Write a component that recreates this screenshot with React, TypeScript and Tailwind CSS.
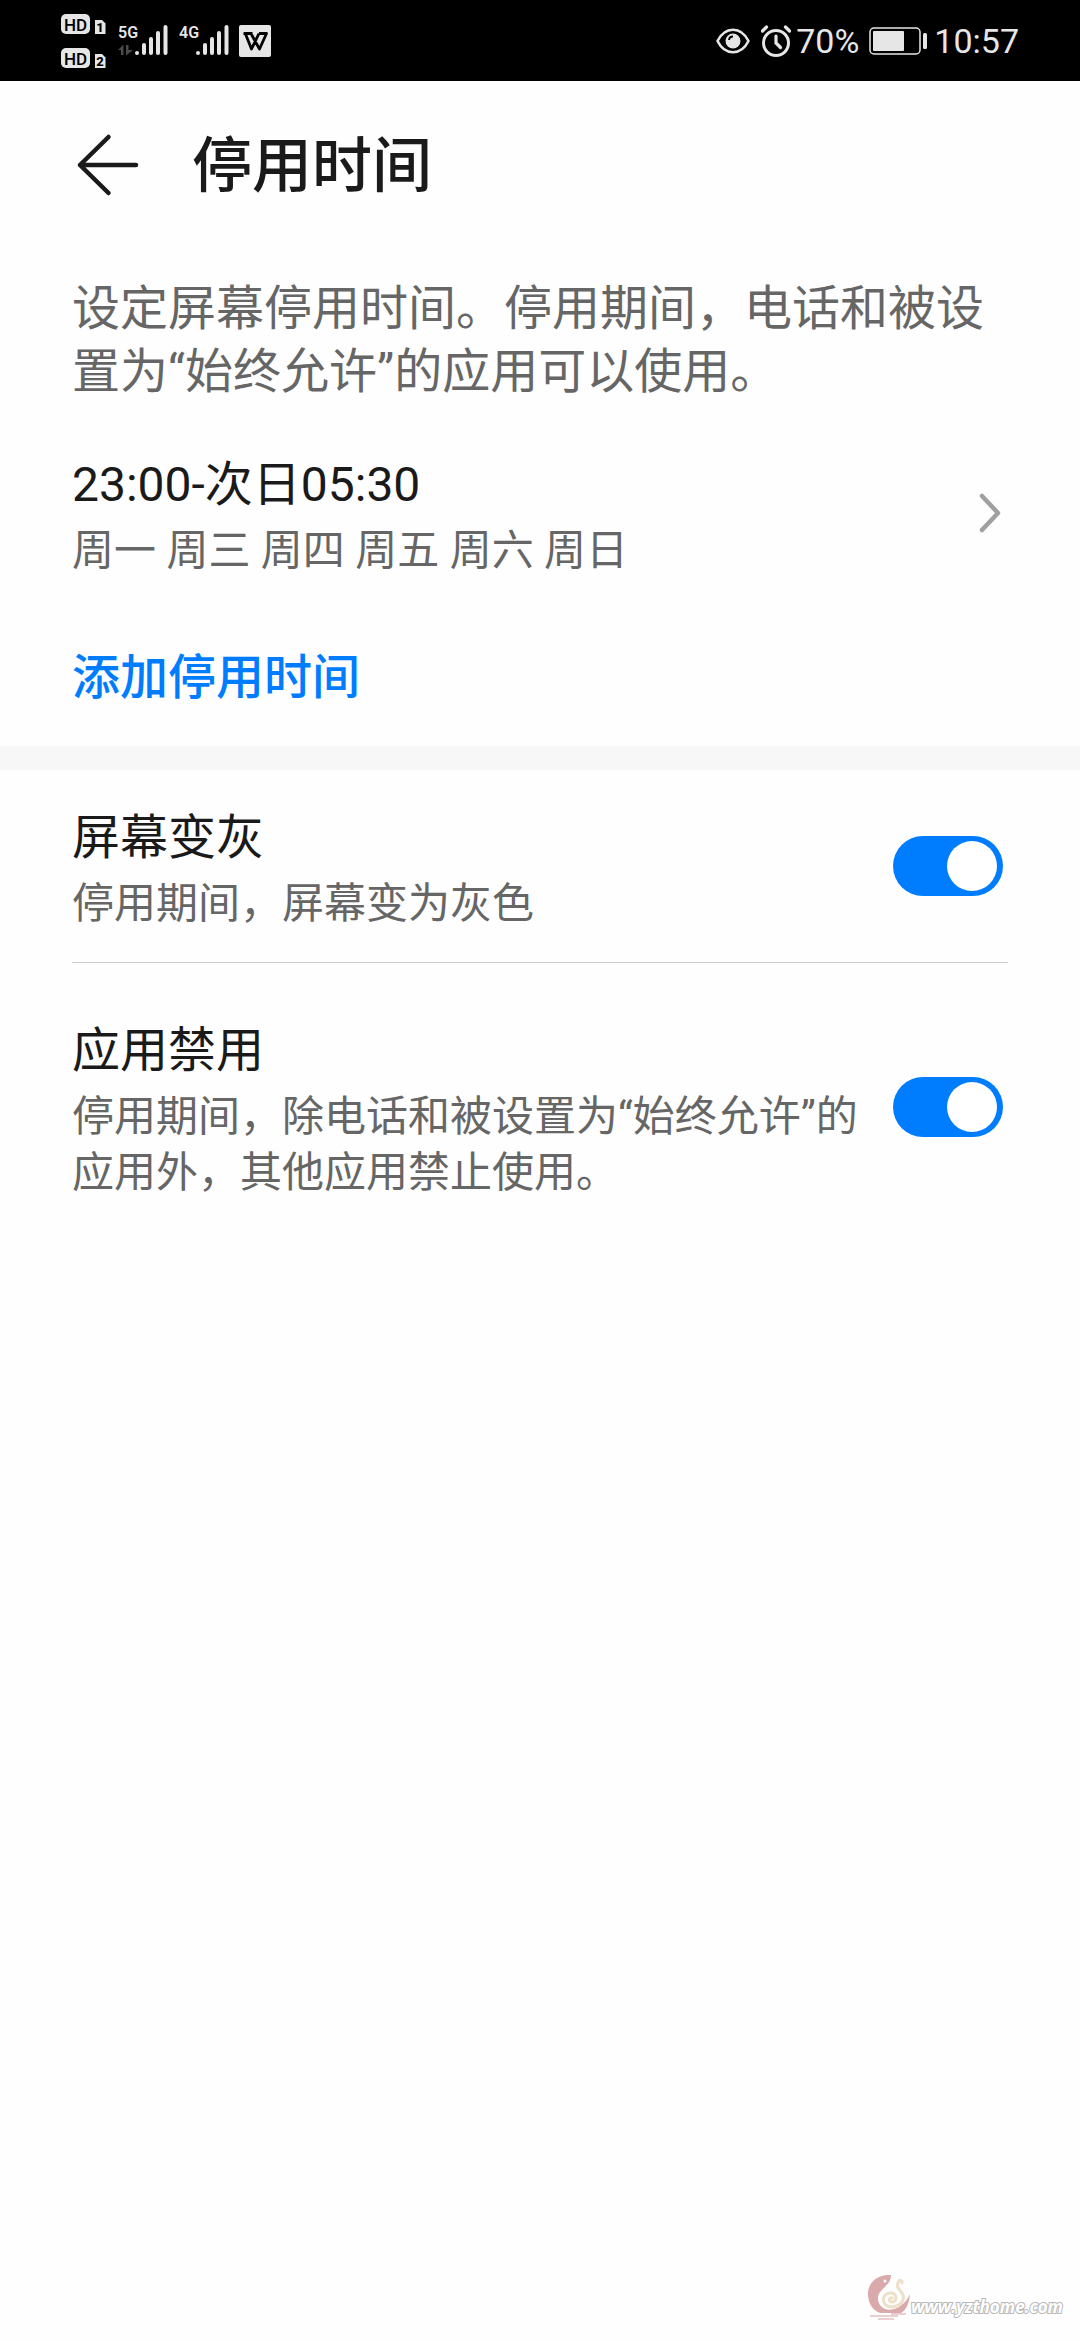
import { useId, useState } from 'react';

function HdBadge({ sim }: { sim: string }) {
  return (
    <svg width="46" height="24" viewBox="0 0 46 24" aria-hidden="true">
      <rect x="0" y="0" width="29" height="20" rx="5" fill="#e6e6e6" />
      <text x="14.5" y="16.500" textAnchor="middle" fontSize="17" fontWeight="500" fill="#000">
        HD
      </text>
      <path d="M34 6h7l3.500 3.500V20H34z" fill="#e6e6e6" />
      <text x="39" y="17.500" textAnchor="middle" fontSize="13" fontWeight="800" fill="#000">
        {sim}
      </text>
    </svg>
  );
}

function Signal({ label, traffic }: { label: string; traffic?: boolean }) {
  return (
    <svg width="50" height="44" viewBox="0 -6 50 44" aria-hidden="true">
      <text x="0" y="13" fontSize="16" fontWeight="600" fill="#e6e6e6">
        {label}
      </text>
      {traffic && <path d="M0 25l5.500-5.500V30H3v-5zM8 20h2.500v5H15l-7 5.500z" fill="#4a4a4a" />}
      <path
        d="M19 28v.1M26 20v8M33 14v14M40 8v20M47.500 2v26"
        stroke="#e6e6e6"
        strokeWidth="4"
        strokeLinecap="round"
      />
    </svg>
  );
}

function StatusBar() {
  return (
    <div className="flex h-[81px] items-center justify-between bg-black px-[61px] text-[#e6e6e6]">
      <div className="flex items-center">
        <div className="mr-[11px] flex flex-col gap-[10px] pt-1">
          <HdBadge sim="1" />
          <HdBadge sim="2" />
        </div>
        <Signal label="5G" traffic />
        <span className="w-[11px]" />
        <Signal label="4G" />
        <svg className="ml-[10px]" width="32" height="32" viewBox="0 0 32 32" aria-hidden="true">
          <rect width="32" height="32" rx="2" fill="#e6e6e6" />
          <path
            d="M4.500 8.500h9M20 8.500h7.500L20.500 24l-8-14.500M6.500 9l6 15L20 8.500"
            fill="none"
            stroke="#000"
            strokeWidth="2.800"
            strokeLinejoin="round"
          />
        </svg>
      </div>
      <div className="flex items-center">
        <svg width="34" height="26" viewBox="0 0 34 26" fill="none" aria-hidden="true">
          <path
            d="M1.500 13C9-2 25-2 32.500 13 25 28 9 28 1.500 13z"
            stroke="#e6e6e6"
            strokeWidth="2.600"
            strokeLinejoin="round"
          />
          <circle cx="17" cy="13" r="7.500" fill="#e6e6e6" />
          <path d="M13 12a4 4 0 0 1 4-3.500" stroke="#000" strokeWidth="2" />
        </svg>
        <svg className="mr-[5px] ml-[11px]" width="30" height="32" viewBox="0 0 30 32" fill="none" aria-hidden="true">
          <g stroke="#e6e6e6" strokeLinecap="round">
            <circle cx="15" cy="18" r="12.500" strokeWidth="3" />
            <path d="M1.500 6l4-4M28.500 6l-4-4" strokeWidth="3.200" />
            <path d="M15 11v7l4.500 4.500" strokeWidth="3.200" />
          </g>
        </svg>
        <span className="text-[34px] leading-10">70%</span>
        <svg className="mr-[5px] ml-[10px]" width="60" height="28" viewBox="0 0 60 28" aria-hidden="true">
          <rect x="1" y="1" width="50" height="26" rx="4" fill="none" stroke="#e6e6e6" strokeWidth="1.500" />
          <rect x="4" y="4" width="31" height="20" rx="1" fill="#e6e6e6" />
          <rect x="54" y="6" width="4" height="16" rx="1.500" fill="#e6e6e6" />
        </svg>
        <span className="text-[34px] leading-10">10:57</span>
      </div>
    </div>
  );
}

function SwitchRow({ title, note }: { title: string; note: string }) {
  const [on, setOn] = useState(true);
  const id = useId();

  return (
    <div className="mx-[72px] flex items-center justify-between py-[30px] pr-[5px]">
      <label htmlFor={id} className="mr-8 flex flex-1 flex-col">
        <span className="text-[48px] leading-[76px] text-[#1a1a1a]">{title}</span>
        <span className="text-[42px] leading-[56px] text-[#666666]">{note}</span>
      </label>
      <input
        id={id}
        type="checkbox"
        role="switch"
        checked={on}
        onChange={(e) => setOn(e.target.checked)}
        className="flex h-[60px] w-[110px] shrink-0 appearance-none items-center rounded-full bg-gray-300 px-[6px] before:size-[50px] before:rounded-full before:bg-white before:content-[''] checked:justify-end checked:bg-[#007dff]"
      />
    </div>
  );
}

export default function App() {
  return (
    <div
      lang="zh-CN"
      className="flex min-h-screen flex-col bg-[#fefefe] font-[Roboto,'Noto_Sans_CJK_SC',sans-serif] text-[#1a1a1a]"
    >
      <StatusBar />

      <header className="flex h-[168px] items-center pl-[72px]">
        <button type="button" aria-label="返回" className="mr-12">
          <svg width="72" height="72" viewBox="0 0 72 72" fill="none" aria-hidden="true">
            <path
              d="M36.500 8L8 36l28.500 28M8 36h56"
              stroke="#1a1a1a"
              strokeWidth="4.500"
              strokeLinecap="round"
              strokeLinejoin="round"
            />
          </svg>
        </button>
        <h1 className="pt-1 text-[60px] leading-[72px] font-medium">停用时间</h1>
      </header>

      <main>
        <p className="mx-[72px] pt-[28px] text-[48px] leading-[63px] text-[#666666]">
          设定屏幕停用时间。停用期间，电话和被设置为“始终允许”的应用可以使用。
        </p>

        <button type="button" className="mt-[14px] flex w-full items-center justify-between px-[72px] py-[30px] text-left">
          <span className="flex flex-col">
            <span className="text-[48px] leading-[76px]">23:00-次日05:30</span>
            <span className="text-[42px] leading-[56px] text-[#666666]">周一 周三 周四 周五 周六 周日</span>
          </span>
          <svg width="36" height="48" viewBox="0 0 36 48" fill="none" aria-hidden="true">
            <path
              d="M10 7l16 17-16 17"
              stroke="#a0a0a0"
              strokeWidth="4.500"
              strokeLinecap="round"
              strokeLinejoin="round"
            />
          </svg>
        </button>

        <button
          type="button"
          className="flex h-[137px] w-full items-center px-[72px] text-[48px] font-medium text-[#007dff]"
        >
          添加停用时间
        </button>

        <div className="h-6 bg-[#f7f7f7]" />

        <SwitchRow title="屏幕变灰" note="停用期间，屏幕变为灰色" />
        <hr className="mx-[72px] border-[#cccccc]" />
        <div className="py-5">
          <SwitchRow title="应用禁用" note="停用期间，除电话和被设置为“始终允许”的应用外，其他应用禁止使用。" />
        </div>
      </main>

      <footer className="mt-auto flex items-end justify-end pr-[17px] pb-[20px]">
        <svg width="44" height="46" viewBox="0 0 44 46" fill="none" aria-hidden="true">
          <path
            d="M24 1C8 0 0 11 1 22c1 10 7 16 13 17h20c5-3 8-9 9-19-5 12-17 18-25 15-8-4-9-13-4-18 4-5 10-8 10-16z"
            fill="#d9a9ac"
          />
          <path
            d="M25 24c-3-1-4 4 0 4 6 0 5-10-2-9-9 1-9 13 1 14 10 0 15-8 11-14-3-4-6-6-4-10 1-4 5-3 4 0"
            stroke="#ece0c8"
            strokeWidth="3"
            strokeLinecap="round"
          />
          <circle cx="18" cy="7" r="1.500" fill="#fff" />
          <path d="M3 42h28M11 45h16M24 40h15" stroke="#e3bfc1" strokeWidth="1.500" />
        </svg>
        <span className="pb-px font-['Open_Sans',sans-serif] text-[17px] leading-6 font-bold text-white italic [paint-order:stroke] [-webkit-text-stroke:2px_#b8b8b8]">
          www.yzthome.com
        </span>
      </footer>
    </div>
  );
}
